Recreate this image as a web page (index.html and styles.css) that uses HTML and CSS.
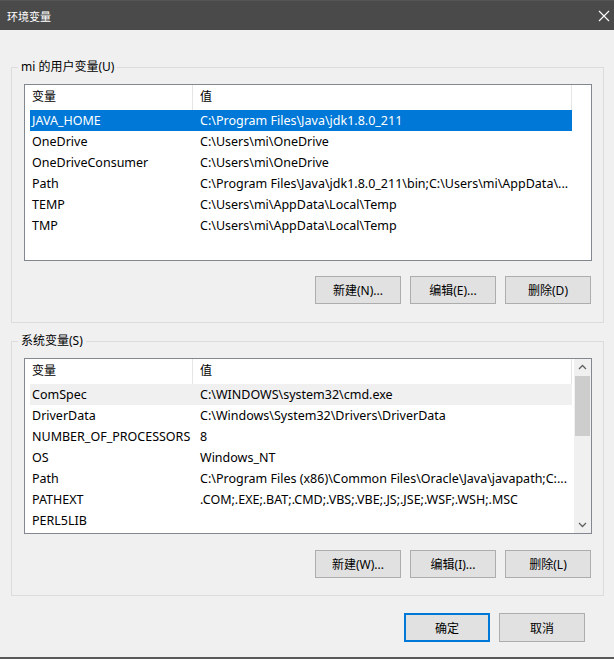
FILE: index.html
```html
<!DOCTYPE html>
<html lang="zh-CN">
<head>
    <meta charset="UTF-8">
    <title>环境变量</title>
    <link rel="stylesheet" href="styles.css">
</head>
<body>
    <div class="window">
        <div class="titlebar">
            <span class="title">环境变量</span>
            <svg class="close" width="12" height="12" viewBox="0 0 12 12">
                <path d="M1 1 L11 11 M11 1 L1 11" stroke="#fff" stroke-width="1.1" fill="none"/>
            </svg>
        </div>

        <div class="dialog">
            <fieldset class="group group-user">
                <legend>mi 的用户变量(U)</legend>
                <div class="list list-user">
                    <div class="list-view">
                        <div class="list-head">
                            <span class="col-name">变量</span>
                            <span class="col-value">值</span>
                        </div>
                        <div class="row selected"><span class="col-name">JAVA_HOME</span><span class="col-value">C:\Program Files\Java\jdk1.8.0_211</span></div>
                        <div class="row"><span class="col-name">OneDrive</span><span class="col-value">C:\Users\mi\OneDrive</span></div>
                        <div class="row"><span class="col-name">OneDriveConsumer</span><span class="col-value">C:\Users\mi\OneDrive</span></div>
                        <div class="row"><span class="col-name">Path</span><span class="col-value">C:\Program Files\Java\jdk1.8.0_211\bin;C:\Users\mi\AppData\...</span></div>
                        <div class="row"><span class="col-name">TEMP</span><span class="col-value">C:\Users\mi\AppData\Local\Temp</span></div>
                        <div class="row"><span class="col-name">TMP</span><span class="col-value">C:\Users\mi\AppData\Local\Temp</span></div>
                    </div>
                </div>
                <div class="buttons">
                    <button>新建(N)...</button>
                    <button>编辑(E)...</button>
                    <button>删除(D)</button>
                </div>
            </fieldset>

            <fieldset class="group group-system">
                <legend>系统变量(S)</legend>
                <div class="list list-system">
                    <div class="list-view">
                        <div class="list-head">
                            <span class="col-name">变量</span>
                            <span class="col-value">值</span>
                        </div>
                        <div class="row hover"><span class="col-name">ComSpec</span><span class="col-value">C:\WINDOWS\system32\cmd.exe</span></div>
                        <div class="row"><span class="col-name">DriverData</span><span class="col-value">C:\Windows\System32\Drivers\DriverData</span></div>
                        <div class="row"><span class="col-name">NUMBER_OF_PROCESSORS</span><span class="col-value">8</span></div>
                        <div class="row"><span class="col-name">OS</span><span class="col-value">Windows_NT</span></div>
                        <div class="row"><span class="col-name">Path</span><span class="col-value">C:\Program Files (x86)\Common Files\Oracle\Java\javapath;C:...</span></div>
                        <div class="row"><span class="col-name">PATHEXT</span><span class="col-value">.COM;.EXE;.BAT;.CMD;.VBS;.VBE;.JS;.JSE;.WSF;.WSH;.MSC</span></div>
                        <div class="row"><span class="col-name">PERL5LIB</span><span class="col-value"></span></div>
                    </div>
                    <div class="scrollbar">
                        <svg class="arrow" width="17" height="17" viewBox="0 0 17 17">
                            <path d="M5 10 L8.5 6.5 L12 10" stroke="#606060" stroke-width="1.3" fill="none"/>
                        </svg>
                        <div class="track">
                            <div class="thumb"></div>
                        </div>
                        <svg class="arrow" width="17" height="17" viewBox="0 0 17 17">
                            <path d="M5 7 L8.5 10.5 L12 7" stroke="#606060" stroke-width="1.3" fill="none"/>
                        </svg>
                    </div>
                </div>
                <div class="buttons buttons-system">
                    <button>新建(W)...</button>
                    <button>编辑(I)...</button>
                    <button>删除(L)</button>
                </div>
            </fieldset>

            <div class="dialog-buttons">
                <button class="primary">确定</button>
                <button>取消</button>
            </div>
        </div>
    </div>
</body>
</html>
```

FILE: styles.css
```css
* {
    box-sizing: border-box;
    margin: 0;
    padding: 0;
}

body {
    font-family: "Noto Sans", "Noto Sans CJK SC", sans-serif;
    font-size: 12px;
    color: #000;
    background-color: #f0f0f0;
}

.window {
    width: 614px;
    height: 659px;
    background-color: #f0f0f0;
    border-bottom: 2px solid #5a5a5a;
}

.titlebar {
    height: 30px;
    background-color: #4a4a4a;
    color: #fff;
    display: flex;
    align-items: center;
    justify-content: space-between;
    padding: 0 4px 0 7px;
    border-top: 1px solid #555;
}

.title {
    font-size: 11px;
}

.group {
    border: 1px solid #dcdcdc;
    margin: 29px 10px 0 11px;
    padding: 9px 11px 18px 12px;
}

.group-system {
    margin-top: 10px;
    padding-bottom: 17px;
}

.group legend {
    margin-left: -6px;
    padding: 0 3px;
    line-height: 16px;
    color: #000;
}

.list {
    background-color: #fff;
    border: 1px solid #828790;
    height: 177px;
    display: flex;
    overflow: hidden;
}

.list-system {
    height: 176px;
}

.list-view {
    flex: 1;
    padding-left: 5px;
}

.list-head {
    display: flex;
    height: 25px;
    align-items: center;
    width: 542px;
}

.list-head span {
    height: 25px;
    line-height: 24px;
    border-right: 1px solid #e5e5e5;
}

.row {
    display: flex;
    height: 21px;
    line-height: 21px;
    width: 542px;
    white-space: nowrap;
    font-size: 12.5px;
}

.col-name {
    width: 163px;
    padding-left: 2px;
    overflow: hidden;
}

.col-value {
    width: 379px;
    padding-left: 7px;
    overflow: hidden;
}

.row.selected {
    background-color: #0078d7;
    color: #fff;
}

.row.hover {
    background-color: #f0f0f0;
}

.scrollbar {
    width: 17px;
    background-color: #f0f0f0;
    display: flex;
    flex-direction: column;
}

.track {
    flex: 1;
}

.thumb {
    height: 60px;
    background-color: #cdcdcd;
    margin: 0 1px;
}

.buttons {
    display: flex;
    justify-content: flex-end;
    gap: 9px;
    margin-top: 15px;
    padding-right: 1px;
}

.buttons-system {
    margin-top: 16px;
}

button {
    width: 86px;
    height: 28px;
    font-family: inherit;
    font-size: 12px;
    color: #000;
    background-color: #e1e1e1;
    border: 1px solid #adadad;
}

.dialog-buttons {
    display: flex;
    justify-content: flex-end;
    gap: 9px;
    margin: 17px 29px 0 0;
}

.dialog-buttons button {
    height: 29px;
}

.dialog-buttons .primary {
    border: 2px solid #0078d7;
}
```
